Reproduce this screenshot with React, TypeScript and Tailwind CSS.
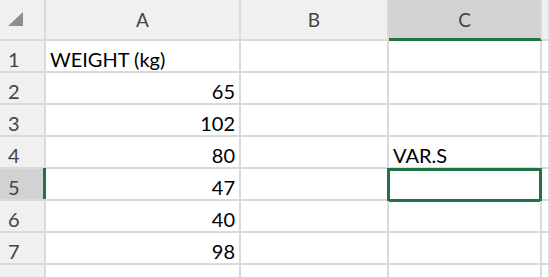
import React from "react";

type Cell = { text?: string; align?: "left" | "right" };

const rows: { n: number; cells: Record<string, Cell> }[] = [
  { n: 1, cells: { A: { text: "WEIGHT (kg)", align: "left" } } },
  { n: 2, cells: { A: { text: "65", align: "right" } } },
  { n: 3, cells: { A: { text: "102", align: "right" } } },
  { n: 4, cells: { A: { text: "80", align: "right" }, C: { text: "VAR.S", align: "left" } } },
  { n: 5, cells: { A: { text: "47", align: "right" } } },
  { n: 6, cells: { A: { text: "40", align: "right" } } },
  { n: 7, cells: { A: { text: "98", align: "right" } } },
  { n: 8, cells: {} },
];

const cols = ["A", "B", "C", "D"];

export default function App() {
  return (
    <div className="w-[550px] h-[277px] overflow-hidden bg-white font-[Lato,sans-serif] text-[20px] text-black">
      <div className="grid grid-cols-[46px_195px_148px_153px_1fr] grid-rows-[41px_repeat(8,32px)]">
        {/* corner */}
        <div className="relative bg-[#f0f0f0] border-r-2 border-b-2 border-[#dadada]">
          <svg width="44" height="39" viewBox="0 0 44 39" className="block">
            <polygon points="23,12 23,26 8,26" fill="#8f8f8f" />
          </svg>
        </div>
        {cols.map((c) =>
          c === "C" ? (
            <div
              key={c}
              className="flex items-center justify-center bg-[#d2d2d2] border-r-2 border-[#dadada] border-b-[3px] border-b-[#217346] text-[#444] text-[19px] leading-none"
            >
              {c}
            </div>
          ) : (
            <div
              key={c}
              className="flex items-center justify-center bg-[#f0f0f0] border-r-2 border-b-2 border-[#dadada] text-[#444] text-[19px] leading-none"
            >
              {c === "D" ? "" : c}
            </div>
          )
        )}
        {rows.map((r) => (
          <React.Fragment key={r.n}>
            <div
              className={
                r.n === 5
                  ? "relative flex items-end pl-2 pb-[1px] bg-[#d2d2d2] border-r-2 border-b-2 border-[#dadada] text-[#444] leading-[22px]"
                  : "relative flex items-end pl-2 pb-[1px] bg-[#f0f0f0] border-r-2 border-b-2 border-[#dadada] text-[#444] leading-[22px]"
              }
            >
              {r.n}
              {r.n === 5 && (
                <div className="absolute right-[-2px] top-[-1px] bottom-0 w-[3px] bg-[#217346]" />
              )}
            </div>
            {cols.map((c) => {
              const cell = r.cells[c];
              const isSel = r.n === 5 && c === "C";
              return (
                <div
                  key={c}
                  className={
                    cell?.align === "right"
                      ? "relative flex items-end justify-end pr-[4px] pb-[1px] border-r-2 border-b-2 border-[#dadada] leading-[22px] whitespace-nowrap"
                      : "relative flex items-end justify-start pl-[4px] pb-[1px] border-r-2 border-b-2 border-[#dadada] leading-[22px] whitespace-nowrap"
                  }
                >
                  {cell?.text}
                  {isSel && (
                    <div className="absolute left-[-2px] top-[-1px] right-[-2px] bottom-[-3px] border-[3px] border-[#217346]" />
                  )}
                </div>
              );
            })}
          </React.Fragment>
        ))}
      </div>
    </div>
  );
}
